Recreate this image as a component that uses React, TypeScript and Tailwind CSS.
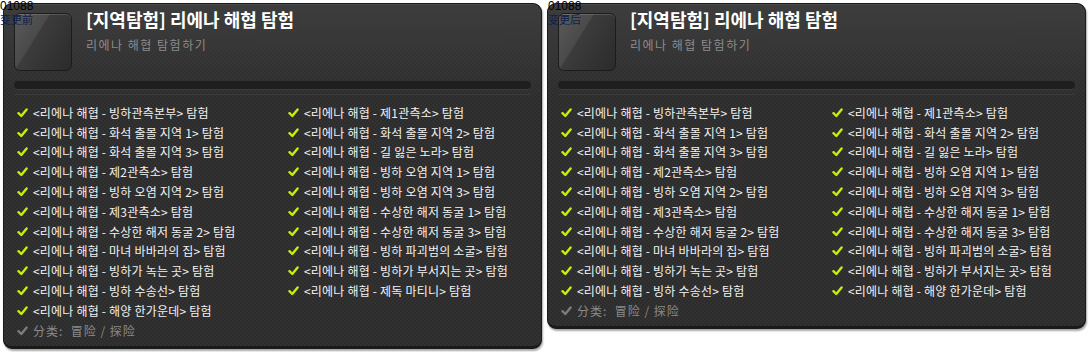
import React from 'react';

const allItems = [
    '빙하관측본부', '제1관측소',
    '화석 출몰 지역 1', '화석 출몰 지역 2',
    '화석 출몰 지역 3', '길 잃은 노라',
    '제2관측소', '빙하 오염 지역 1',
    '빙하 오염 지역 2', '빙하 오염 지역 3',
    '제3관측소', '수상한 해저 동굴 1',
    '수상한 해저 동굴 2', '수상한 해저 동굴 3',
    '마녀 바바라의 집', '빙하 파괴범의 소굴',
    '빙하가 녹는 곳', '빙하가 부서지는 곳',
    '빙하 수송선', '제독 마티니',
    '해양 한가운데',
];

const Check = ({ gray }: { gray?: boolean }) => (
    <svg width="11" height="10" viewBox="0 0 11 10" className="shrink-0">
        <path d="M1.5 5.2 L4.3 8 L9.6 1.4" fill="none" stroke={gray ? '#7c7c7c' : '#c8ec0c'} strokeWidth="2.4" strokeLinecap="round" strokeLinejoin="round" />
    </svg>
);

interface PanelProps {
    items: string[]
}

const Panel: React.FC<PanelProps> = ({ items }) => {
    return (
        <div className="w-[539px] rounded-[9px] border border-[#1a1a1a] border-b-[3px] shadow-[1px_2px_2px_rgba(0,0,0,0.35)] bg-[#2f2f2f] bg-[image:repeating-conic-gradient(#2c2c2c_0%_25%,#323232_0%_50%)] bg-[length:4px_4px] overflow-hidden">
            <div className="bg-gradient-to-b from-[#3d3d3d] to-[#2f2f2f]/0 px-[10px] pt-[8px] border-t border-[#4a4a4a] rounded-t-[9px]">
                <div className="flex items-start">
                    <div className="w-[58px] h-[58px] rounded-[6px] border border-[#1c1c1c] bg-[linear-gradient(122deg,#5a5a5a_0%,#4a4a4a_38%,#3c3c3c_39%,#333_70%,#2b2b2b_100%)] shadow-[inset_0_1px_0_rgba(255,255,255,0.15)] shrink-0" />
                    <div className="ml-[14px] -mt-[5px]">
                        <p className="text-[18px] leading-[22px] font-bold text-white font-['Noto_Sans_CJK_KR',sans-serif]">[지역탐험] 리에나 해협 탐험</p>
                        <p className="mt-[8px] text-[12px] leading-[14px] tracking-[1.5px] text-[#8c8c8c] font-['Noto_Sans_CJK_KR',sans-serif]">리에나 해협 탐험하기</p>
                    </div>
                </div>
                <div className="mt-[10px] h-[8px] w-[517px] rounded-full bg-[#1e1e1e] shadow-[0_1px_0_rgba(255,255,255,0.06)]" />
                <div className="mt-[5px] h-px bg-[#3a3a3a]" />
            </div>
            <div className="px-[13px] pt-[8px] pb-[5px] font-['Noto_Sans_CJK_KR',sans-serif] text-[12px] tracking-[0.2px] text-[#f2f2f2]">
                <div className="grid grid-cols-[271px_271px] auto-rows-[19.8px]">
                    {items.map((name) => (
                        <div key={name} className="flex items-center gap-[5px] whitespace-nowrap">
                            <Check />
                            <span>&lt;리에나 해협 - {name}&gt; 탐험</span>
                        </div>
                    ))}
                </div>
                <div className="flex items-center gap-[5px] h-[19.8px] text-[#8a8a8a] tracking-[1px] font-['Noto_Sans_CJK_SC',sans-serif]">
                    <Check gray />
                    <span>分类:&nbsp; 冒险 / 探险</span>
                </div>
            </div>
        </div>
    );
};

export default function App() {
    const right = allItems.filter((n) => n !== '제독 마티니');
    return (
        <div className="relative w-[1090px] h-[352px] bg-white">
            <div className="flex items-start gap-[5px] pt-[3px] pl-[3px]">
                <Panel items={allItems} />
                <Panel items={right} />
            </div>
            <div className="absolute left-0 top-0 text-black">
                <p className="h-[13px] text-[12px] leading-[13px] font-['Liberation_Sans',sans-serif]">01088</p>
                <p className="h-[12px] text-[11px] leading-[12px] text-[#10204a] font-['Noto_Sans_CJK_SC',sans-serif]">变更前</p>
            </div>
            <div className="absolute left-[548px] top-0 text-black">
                <p className="h-[13px] text-[12px] leading-[13px] font-['Liberation_Sans',sans-serif]">01088</p>
                <p className="h-[12px] text-[11px] leading-[12px] text-[#10204a] font-['Noto_Sans_CJK_SC',sans-serif]">变更后</p>
            </div>
        </div>
    );
}
